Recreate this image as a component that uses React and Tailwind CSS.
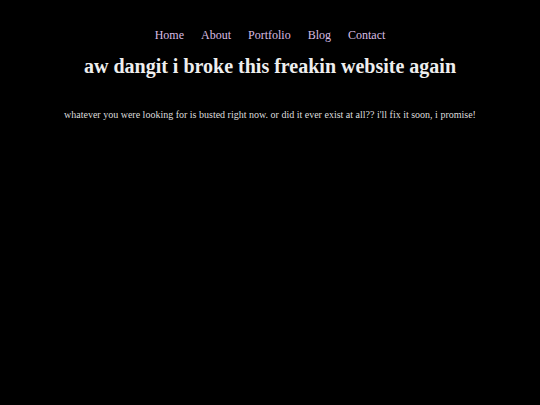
import React from 'react';

const links = ['Home', 'About', 'Portfolio', 'Blog', 'Contact'];

const App = () => {
    return (
        <div className="min-h-screen bg-black text-[#e5e5e5]" style={{ fontFamily: '"Liberation Serif", serif' }}>
            <nav className="flex justify-center gap-[17px] pt-[26px] text-[12px] leading-[18px] text-[#d9bde3]">
                {links.map(link => (
                    <a key={link} href="#">{link}</a>
                ))}
            </nav>
            <h1 className="mt-[7px] text-center text-[20px] leading-[30px] font-bold text-[#eeeeee]">
                aw dangit i broke this freakin website again
            </h1>
            <p className="mt-[26px] text-center text-[10px] leading-[15px] text-[#dddddd]">
                whatever you were looking for is busted right now. or did it ever exist at all?? i'll fix it soon, i promise!
            </p>
        </div>
    );
};

export default App;
